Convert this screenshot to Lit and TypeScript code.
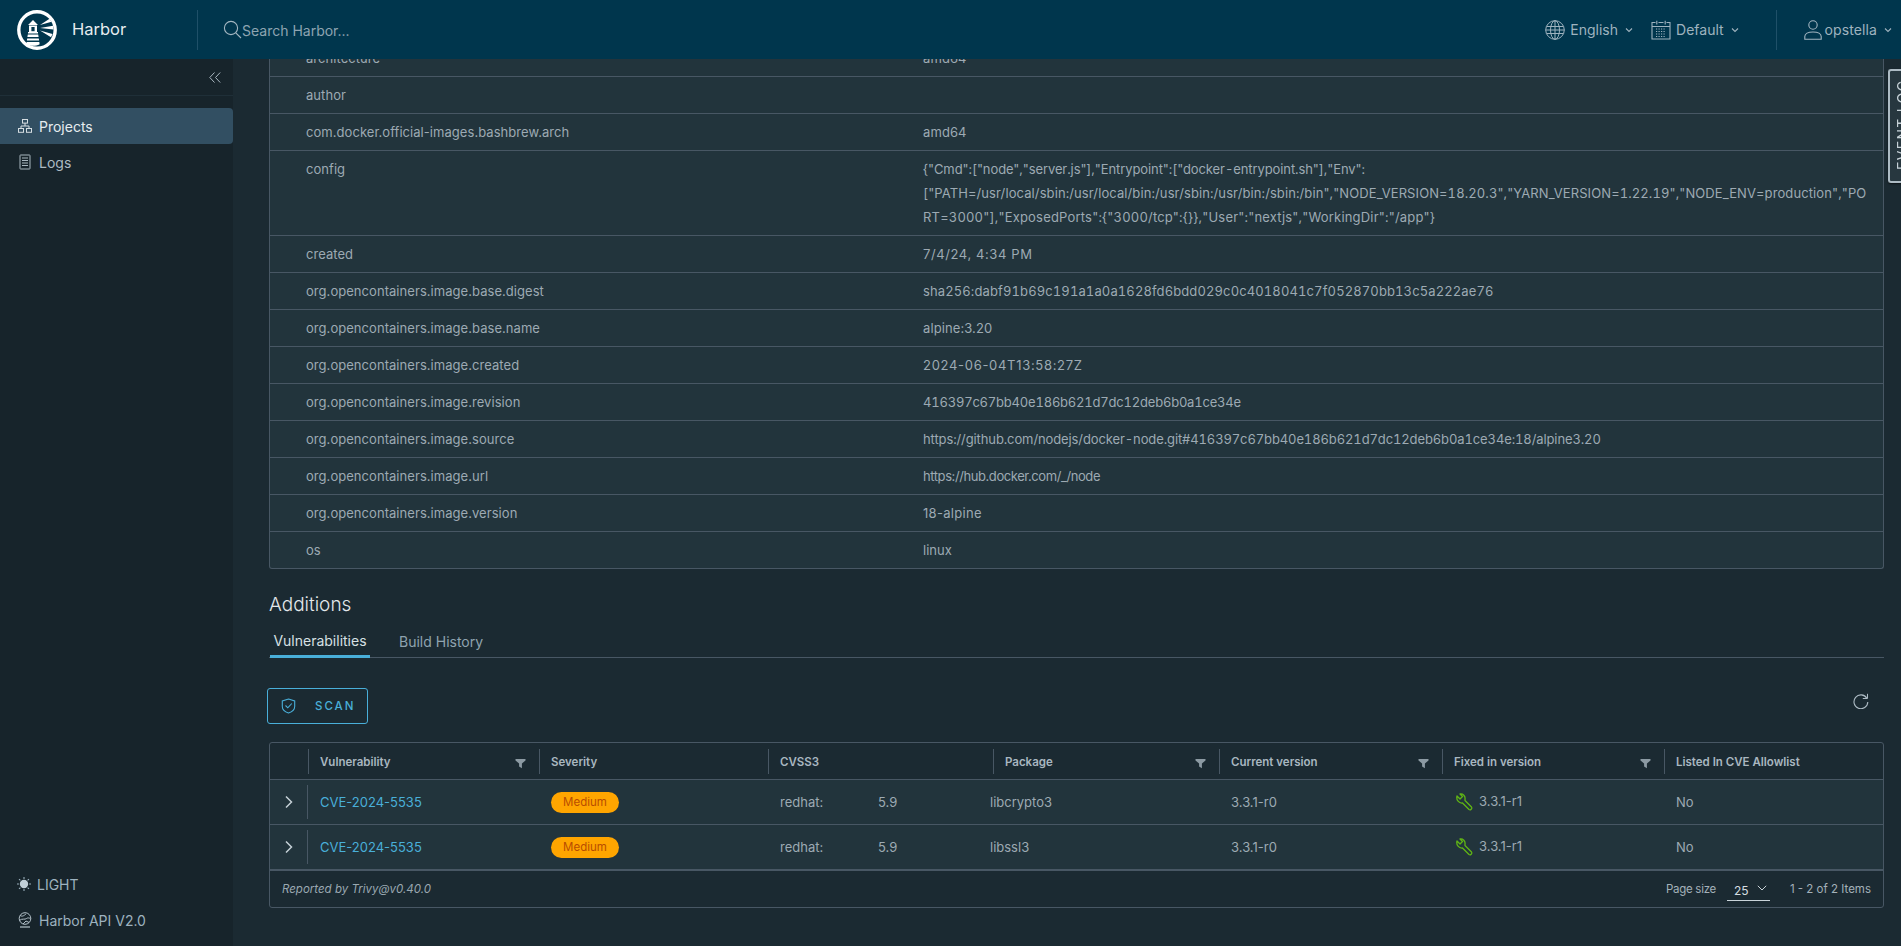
import { LitElement, html, css } from "lit";
import { customElement } from "lit/decorators.js";

const caret = html`<svg class="caret" width="8" height="6" viewBox="0 0 8 6"><path d="M1 1.5 4 4.5 7 1.5" fill="none" stroke="currentColor" stroke-width="1.1"/></svg>`;
const filter = html`<svg class="filter" width="11" height="11" viewBox="0 0 11 11"><path d="M0.5 1H10.5V2.6L6.9 5.6V10.2L4.1 8.6V5.6L0.5 2.6Z" fill="#8c9aa3"/></svg>`;
const chevron = html`<svg width="8" height="14" viewBox="0 0 8 14"><path d="M1 1.5 6.5 7 1 12.5" fill="none" stroke="#c5d0d6" stroke-width="1.5"/></svg>`;
const wrench = html`<svg class="wrench" width="18" height="18" viewBox="0 0 18 18"><path d="M2 3 5 6 7.5 3.5 5 1C8 .5 10.5 3 10 6V7.5L16.5 14C17.5 15.5 15.5 17.5 14 16.5L7.5 10C4 10.5 1 7 2 3Z" fill="none" stroke="#60b515" stroke-width="1.3" stroke-linejoin="round"/></svg>`;

/* value lines: [text, letter-spacing in px, tabular digits] */
type Line = [string, number, boolean];
const rows: [string, Line[]][] = [
  ["architecture", [["amd64", 0.1, false]]],
  ["author", [["", 0, false]]],
  ["com.docker.official-images.bashbrew.arch", [["amd64", 0.1, false]]],
  ["config", [
    ['{"Cmd":["node","server.js"],"Entrypoint":["docker-entrypoint.sh"],"Env":', -0.09, true],
    ['["PATH=/usr/local/sbin:/usr/local/bin:/usr/sbin:/usr/bin:/sbin:/bin","NODE_VERSION=18.20.3","YARN_VERSION=1.22.19","NODE_ENV=production","PO', 0.1, true],
    ['RT=3000"],"ExposedPorts":{"3000/tcp":{}},"User":"nextjs","WorkingDir":"/app"}', 0.19, true],
  ]],
  ["created", [["7/4/24, 4:34 PM", 0.6, false]]],
  ["org.opencontainers.image.base.digest", [["sha256:dabf91b69c191a1a0a1628fd6bdd029c0c4018041c7f052870bb13c5a222ae76", 0.12, true]]],
  ["org.opencontainers.image.base.name", [["alpine:3.20", 0.1, false]]],
  ["org.opencontainers.image.created", [["2024-06-04T13:58:27Z", 0.7, false]]],
  ["org.opencontainers.image.revision", [["416397c67bb40e186b621d7dc12deb6b0a1ce34e", -0.2, true]]],
  ["org.opencontainers.image.source", [["https://github.com/nodejs/docker-node.git#416397c67bb40e186b621d7dc12deb6b0a1ce34e:18/alpine3.20", -0.11, true]]],
  ["org.opencontainers.image.url", [["https://hub.docker.com/_/node", -0.42, false]]],
  ["org.opencontainers.image.version", [["18-alpine", 0.3, false]]],
  ["os", [["linux", 0, false]]],
];

const cols: [string, boolean][] = [
  ["Vulnerability", true], ["Severity", false], ["CVSS3", false], ["Package", true],
  ["Current version", true], ["Fixed in version", true], ["Listed In CVE Allowlist", false],
];

@customElement("app-root")
export class AppRoot extends LitElement {
  static styles = css`
    :host { display: flex; flex-direction: column; width: 100%; height: 100vh; overflow: hidden; background: #1b2a32;
      font-family: Inter, "Open Sans", sans-serif; font-size: 13px; color: #acbac3; }
    svg { display: block; flex: none; }
    .top { height: 59px; flex: none; background: #00364d; display: flex; align-items: center; padding: 0 9px 0 17px; color: #a3b6c1; }
    .brand { font-size: 16.5px; color: #e6ecef; margin: 0 0 2px 15px; width: 125px; }
    .vr { width: 1px; height: 40px; background: #1f5068; flex: none; }
    .search { display: flex; align-items: center; margin-left: 25px; flex: 1; color: #8ea4b1; font-size: 14px; }
    .search span { margin-top: 2px; }
    .nav { display: flex; align-items: center; gap: 5px; font-size: 14px; color: #9fb3bf; }
    .caret { color: #9fb3bf; margin-left: 2px; }
    .lang { margin-right: 18px; }
    .def { margin-right: 37px; }
    .user { margin-left: 27px; gap: 3px; letter-spacing: .1px; }
    .user .caret { margin-left: 4px; }
    .shell { flex: 1; display: flex; min-height: 0; }
    .side { width: 233px; flex: none; background: #17242b; display: flex; flex-direction: column; color: #acbac3; }
    .collapse { height: 36px; flex: none; border-bottom: 1px solid #1f2f38; display: flex; justify-content: flex-end; align-items: center; padding-right: 12px; }
    .item { height: 36px; display: flex; align-items: center; padding-left: 18px; gap: 7px; font-size: 14px; flex: none; }
    .item .ic { width: 14px; }
    .item.active { background: #324f62; color: #e6ecef; border-radius: 0 4px 4px 0; margin-top: 12px; }
    .spacer { flex: 1; }
    .item.low { color: #9db2bf; }
    .sun { margin: 0 -1px; }
    .api { margin-bottom: 8px; }
    .main { flex: 1; min-width: 0; overflow: hidden; padding: 0 17px 0 36px; }
    .props { margin-top: -19px; border: 1px solid #485764; border-top: 0; border-radius: 0 0 3px 3px; background: #22343c; color: #9daab3; }
    .prop { display: grid; grid-template-columns: 653px 1fr; border-bottom: 1px solid #485764; min-height: 36px; }
    .prop:last-child { border-bottom: 0; }
    .k { padding: 6px 0 0 36px; line-height: 24px; letter-spacing: .05px; }
    .v { padding-top: 6px; line-height: 24px; white-space: nowrap; }
    .v.multi { padding-bottom: 6px; }
    .tnum { font-variant-numeric: tabular-nums; }
    h3 { margin: 24px 0 0; font-size: 19px; font-weight: 300; line-height: 24px; color: #e3e8eb; }
    .tabs { height: 41px; box-sizing: border-box; border-bottom: 1px solid #485764; display: flex; padding-left: 1px; gap: 29px; align-items: flex-end; }
    .tab { height: 40px; box-sizing: border-box; display: flex; align-items: center; justify-content: center; padding-top: 7px; font-size: 14px; color: #8fa3af; margin-bottom: -1px; }
    .tab.on { width: 100px; color: #d8e0e4; border-bottom: 3px solid #49afd9; }
    .bar { display: flex; justify-content: space-between; margin-top: 30px; padding-right: 15px; }
    .scan { margin-left: -2px; width: 101px; height: 36px; box-sizing: border-box; border: 1px solid #49afd9; border-radius: 3px; color: #49afd9;
      display: flex; align-items: center; padding-left: 13px; gap: 19px; font-size: 11.5px; font-weight: 500; letter-spacing: 2px; }
    .refresh { margin-top: 5px; }
    .grid { margin-top: 18px; border: 1px solid #485764; border-radius: 3px; }
    .r { display: grid; grid-template-columns: 38px 231px 229px 225px 226px 223px 222px 219px; }
    .hd { height: 36px; border-bottom: 1px solid #485764; font-size: 11.5px; font-weight: 600; color: #a9b7c0; align-items: center; }
    .hc { height: 25px; border-left: 1px solid #485764; display: flex; align-items: center; padding: 0 13px 0 11px; margin-top: 1px; }
    .filter { margin-left: auto; margin-top: 3px; }
    .dr { height: 44px; background: #22343c; border-bottom: 1px solid #485764; align-items: center; color: #9daab3; }
    .dr.last { border-bottom-width: 2px; }
    .dc { padding-left: 12px; display: flex; align-items: center; }
    .exp { height: 34px; display: flex; align-items: center; justify-content: center; border-right: 1px solid #485764; }
    .link { color: #49afd9; font-size: 13px; }
    .badge { width: 68px; height: 21px; border-radius: 11px; background: #ffa500; color: #b84d00; font-size: 11.5px; display: flex; align-items: center; justify-content: center; }
    .score { width: 98px; }
    .pkg { margin-left: -15px; }
    .fix { gap: 6px; padding-left: 13px; }
    .fix span { margin-top: -2px; }
    .foot { height: 36px; display: flex; align-items: center; padding: 0 12px; font-size: 11.5px; color: #a4b1b9; }
    .foot em { color: #9aa8b1; }
    .psize { margin-left: auto; letter-spacing: -.3px; }
    .sel { width: 43px; height: 24px; box-sizing: border-box; margin: 0 20px 0 11px; border-bottom: 1px solid #c9d3d9; color: #d5dde1; display: flex; align-items: center; padding: 4px 0 0 7px; gap: 8px; font-size: 12px; }
    .sel svg { margin-top: -6px; }
    .tablet { position: fixed; left: 1888px; top: 69px; width: 24px; height: 114px; box-sizing: border-box; background: #27373f; border: 2px solid #adbbc4; border-right: 0; border-radius: 3px 0 0 3px; box-shadow: 0 1px 2px rgba(0,0,0,.6);
      color: #c5d0d6; font-size: 14px; letter-spacing: 1.3px; writing-mode: vertical-rl; }
    .tablet span { display: block; transform: rotate(180deg); height: 100%; line-height: 18px; padding-top: 11px; box-sizing: border-box; white-space: nowrap; }
  `;

  render() {
    return html`
      <div class="top">
        <svg width="40" height="40" viewBox="0 0 40 40">
          <circle cx="20" cy="20" r="18.2" fill="none" stroke="#fff" stroke-width="3.4"/>
          <path d="M11 15 16 10 21 15Z M12 15.5H20V22H21V23.5H11V22H12ZM10.8 24.5H21.2L21.6 27H10.4ZM10.2 28.4H21.8L22.1 30.6H9.9ZM9.7 32H22.3L22.6 34.2C19 36.2 13 36.2 9.4 34.2Z" fill="#fff"/>
          <rect x="14.4" y="17" width="3.2" height="4.2" fill="#00364d"/>
          <path d="M23 15 32.5 8.8 34.6 11.8ZM23 18 36 15.8 36.4 19.4ZM23 20.5 35.5 24 34 27.2Z" fill="#fff"/>
        </svg>
        <div class="brand">Harbor</div>
        <div class="vr"></div>
        <div class="search">
          <svg width="19" height="19" viewBox="0 0 19 19"><circle cx="8" cy="8" r="6.6" fill="none" stroke="#a3b6c1" stroke-width="1.1"/><path d="M12.8 12.8 18 18" stroke="#a3b6c1" stroke-width="1.1"/></svg>
          <span>Search Harbor...</span>
        </div>
        <div class="nav lang">
          <svg width="20" height="20" viewBox="0 0 20 20" fill="none" stroke="#9fb3bf" stroke-width="1"><circle cx="10" cy="10" r="9.3"/><ellipse cx="10" cy="10" rx="4.5" ry="9.3"/><path d="M10 .7V19.3M1.6 6.5H18.4M1.6 13.5H18.4M.7 10H19.3"/></svg>
          English ${caret}
        </div>
        <div class="nav def">
          <svg width="20" height="20" viewBox="0 0 20 20" fill="none" stroke="#9fb3bf" stroke-width="1.1"><path d="M4.5 2.5H1V19H19V2.5H15.5M7.5 2.5H12.5M5.8 .8V4.5M14.2 .8V4.5M1 6.5H19"/><path d="M5 9H15M5 11.5H15M5 14H15M5 16.5H15" stroke-dasharray="1.2 1.3"/></svg>
          Default ${caret}
        </div>
        <div class="vr"></div>
        <div class="nav user">
          <svg width="18" height="20" viewBox="0 0 18 20" fill="none" stroke="#a3b6c1" stroke-width="1.1"><circle cx="9" cy="5" r="4.2"/><path d="M.8 19.3V16.5C.8 14 4 12 9 12S17.2 14 17.2 16.5V19.3Z"/></svg>
          opstella ${caret}
        </div>
      </div>
      <div class="shell">
        <aside class="side">
          <div class="collapse">
            <svg width="12" height="11" viewBox="0 0 12 11" fill="none" stroke="#a9b7c0" stroke-width="1"><path d="M5.5 .5 .8 5.5 5.5 10.5M11.2 .5 6.5 5.5 11.2 10.5"/></svg>
          </div>
          <div class="item active">
            <svg class="ic" width="14" height="14" viewBox="0 0 14 14" fill="none" stroke="#d5dde1" stroke-width="1"><rect x="4.5" y=".5" width="5" height="3.6"/><rect x=".5" y="9.5" width="5" height="3.8"/><rect x="8.5" y="9.5" width="5" height="3.8"/><path d="M7 4V7M3 9.5V7H11V9.5"/></svg>
            Projects
          </div>
          <div class="item">
            <svg class="ic" width="14" height="16" viewBox="0 0 14 16" fill="none" stroke="#a9b7c0"><rect x="2" y="1" width="10" height="14" rx=".5"/><path d="M4 4H10M4 6.5H10M4 9H10M4 11.5H10" stroke-width="1.2"/></svg>
            Logs
          </div>
          <div class="spacer"></div>
          <div class="item low">
            <svg class="ic sun" width="16" height="16" viewBox="0 0 16 16"><circle cx="8" cy="8" r="4.8" fill="#c2d0d8"/><path d="M8 0V2.2M8 13.8V16M0 8H2.2M13.8 8H16M2.3 2.3 3.9 3.9M12.1 12.1 13.7 13.7M2.3 13.7 3.9 12.1M12.1 3.9 13.7 2.3" stroke="#9db2bf" stroke-width="1.2"/></svg>
            LIGHT
          </div>
          <div class="item low api">
            <svg class="ic" width="14" height="16" viewBox="0 0 14 16" fill="none" stroke="#b3c1c9" stroke-width="1"><circle cx="7" cy="6.5" r="5.8"/><path d="M2 3.5C4.5 5 6 3.5 8 2M1.5 8.5C4 6 7 8 8.5 6.5 10 5.5 11 6 12.5 6.5M5 12 8 9 11 10.5"/><path d="M2 15H12" stroke-width="1.2"/></svg>
            Harbor API V2.0
          </div>
        </aside>
        <main class="main">
          <div class="props">
            ${rows.map(([k, v]) => html`
              <div class="prop"><div class="k">${k}</div><div class="v ${v.length > 1 ? "multi" : ""}">${v.map(([t, ls, tn]) => html`<div class=${tn ? "tnum" : ""} style="letter-spacing:${ls}px">${t}</div>`)}</div></div>`)}
          </div>
          <h3>Additions</h3>
          <div class="tabs"><div class="tab on">Vulnerabilities</div><div class="tab">Build History</div></div>
          <div class="bar">
            <div class="scan">
              <svg width="15" height="16" viewBox="0 0 15 16" fill="none" stroke="#49afd9" stroke-width="1.1"><path d="M7.5 1 13.7 3V8.5C13.7 11.5 10.5 14 7.5 15 4.5 14 1.3 11.5 1.3 8.5V3Z"/><path d="M4.5 7.5 6.8 9.8 10.8 5.5"/></svg>
              SCAN
            </div>
            <svg class="refresh" width="16" height="16" viewBox="0 0 16 16" fill="none" stroke="#adbbc4" stroke-width="1.1"><path d="M13.8 5.2A6.9 6.9 0 1 0 14.8 9"/><path d="M14.5 .8V5.5H9.8" stroke-width="1"/></svg>
          </div>
          <div class="grid">
            <div class="r hd">
              <div></div>
              ${cols.map(([n, f]) => html`<div class="hc">${n}${f ? filter : ""}</div>`)}
            </div>
            ${["libcrypto3", "libssl3"].map((p, i) => html`
              <div class="r dr ${i ? "last" : ""}">
                <div class="exp">${chevron}</div>
                <div class="dc link">CVE-2024-5535</div>
                <div class="dc"><div class="badge">Medium</div></div>
                <div class="dc"><div class="score">redhat:</div><div>5.9</div></div>
                <div class="dc"><div class="pkg">${p}</div></div>
                <div class="dc">3.3.1-r0</div>
                <div class="dc fix">${wrench}<span>3.3.1-r1</span></div>
                <div class="dc">No</div>
              </div>`)}
            <div class="foot">
              <em>Reported by Trivy@v0.40.0</em>
              <span class="psize">Page size</span>
              <div class="sel">25 <svg width="10" height="6" viewBox="0 0 10 6"><path d="M.8 .8 5 5 9.2 .8" fill="none" stroke="#c9d3d9" stroke-width="1"/></svg></div>
              <span>1 - 2 of 2 Items</span>
            </div>
          </div>
        </main>
      </div>
      <div class="tablet"><span>EVENT LOG</span></div>
    `;
  }
}
